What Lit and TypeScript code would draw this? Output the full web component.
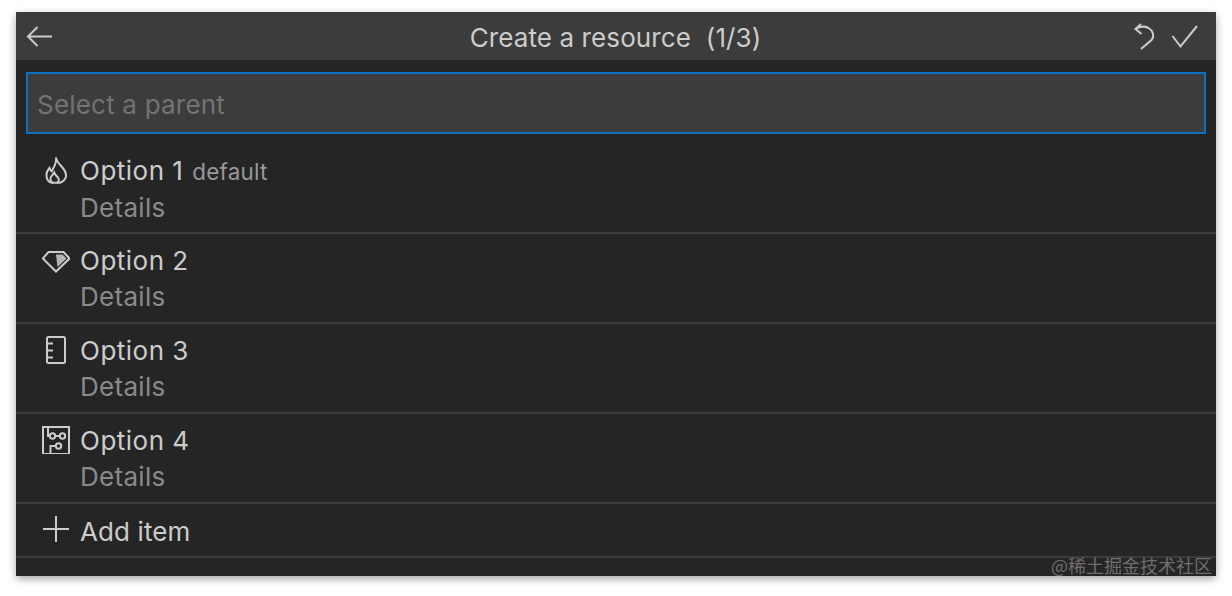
import { LitElement, html, css, svg } from 'lit';
import { customElement } from 'lit/decorators.js';

const flame = svg`<path d="M14 1.500c.5 4 3.500 6.500 6 9.500 3 3.500 5 7.500 3.500 11-1 2.500-3 4-5.500 4.800h-8C7.500 26.500 5.500 24.500 4.800 22c-1-3.500.5-7.500 2.700-10 .5 1.500 1 2.500 2.200 3.300C12 11 15 7 14 1.500z"/><path d="M11 27c-2.800-1.700-3.300-4.500-1.800-6.500l3-4c.5 2 2 3.200 3.300 4.500 2 2 1.700 4.500-.5 6"/>`;

const gem = svg`<path d="M6.500 6h15l6 6.500L14 25.500.8 12.500z"/><path d="M14 8.500h6.500l4 4L15.500 21z" fill="currentColor" stroke="none" opacity=".85"/>`;

const ruler = svg`<rect x="5" y="1" width="18" height="26" rx="1.500"/><path d="M5 7.500h6M5 14.500h6M5 21.500h6"/>`;

const board = svg`<rect x="1" y="1" width="26" height="27"/><circle cx="10.500" cy="10" r="2.700"/><circle cx="20.500" cy="10" r="2.700"/><circle cx="16.500" cy="20" r="2.700"/><path d="M6 1v9h1.800M13.200 10h4.600M13.800 20H8.500v8"/>`;

const options = [
  { label: 'Option 1', hint: 'default', icon: flame },
  { label: 'Option 2', hint: '', icon: gem },
  { label: 'Option 3', hint: '', icon: ruler },
  { label: 'Option 4', hint: '', icon: board },
];

@customElement('app-root')
export class AppRoot extends LitElement {
  static styles = css`
    :host {
      display: block;
      height: 596px;
      padding: 12px 16px 20px;
      box-sizing: border-box;
      background: #fff;
      font-family: Inter, 'Noto Sans', sans-serif;
    }

    .panel {
      position: relative;
      height: 564px;
      background: #252526;
      box-shadow: 0 3px 8px rgba(0, 0, 0, 0.35);
    }

    .title-bar {
      display: flex;
      align-items: center;
      height: 48px;
      padding: 0 17px 0 10px;
      background: #3c3c3c;
      color: #ccc;
    }

    .title {
      flex: 1;
      text-align: center;
      font-size: 26px;
      letter-spacing: 0.1px;
      padding: 3px 0 0 46px;
    }

    .actions {
      display: flex;
      gap: 12px;
    }

    .title-bar svg,
    .row svg {
      width: 28px;
      height: 28px;
      fill: none;
      stroke: currentColor;
      stroke-width: 2;
      display: block;
    }

    .input {
      display: flex;
      align-items: center;
      height: 62px;
      margin: 12px 10px 10px;
      padding: 3px 9px 0;
      box-sizing: border-box;
      border: 2px solid #0e70c0;
      background: #3c3c3c;
      color: #737373;
      font-size: 26px;
      letter-spacing: 0.2px;
    }

    .row {
      display: flex;
      height: 90px;
      box-sizing: border-box;
      border-bottom: 2px solid #3c3c3c;
      padding: 10px 0 0 26px;
      gap: 10px;
      color: #ccc;
    }

    .row svg {
      flex: none;
      margin-top: 2px;
    }

    .main {
      font-size: 26px;
      line-height: 34px;
      letter-spacing: 0.5px;
    }

    .hint {
      font-size: 22.500px;
      letter-spacing: 0.2px;
      color: #999;
      margin-left: 1px;
    }

    .detail {
      font-size: 26px;
      line-height: 37px;
      letter-spacing: 0.3px;
      color: #8a8a8a;
    }

    .row.add {
      height: 54px;
      align-items: center;
      padding-top: 0;
    }

    .row.add svg {
      margin-top: -2px;
    }

    .row.add .main {
      letter-spacing: 0.1px;
      padding-top: 3px;
    }

    .mark {
      position: absolute;
      right: 4px;
      bottom: 0;
      font-family: 'Noto Sans CJK SC', sans-serif;
      font-size: 18px;
      line-height: 22px;
      color: #6e6e6e;
    }
  `;

  render() {
    return html`
      <div class="panel">
        <div class="title-bar">
          <svg viewBox="0 0 28 28"><path d="M26 14.500H3M11.500 5l-9.500 9.500 9.500 9.500"/></svg>
          <div class="title">Create a resource&nbsp; (1/3)</div>
          <div class="actions">
            <svg viewBox="0 0 28 28"><path d="M10.500 12L4.500 7 10 2M4.500 7c4-2.500 9-3 13-1 4.500 2.500 6 7.500 3.500 11.500L10 27"/></svg>
            <svg viewBox="0 0 28 28"><path d="M1.500 14l8 10.500L26 4"/></svg>
          </div>
        </div>
        <div class="input">Select a parent</div>
        ${options.map(
          (o) => html`
            <div class="row">
              <svg viewBox="0 0 28 28">${o.icon}</svg>
              <div>
                <div class="main">${o.label}${o.hint ? html` <span class="hint">${o.hint}</span>` : ''}</div>
                <div class="detail">Details</div>
              </div>
            </div>
          `
        )}
        <div class="row add">
          <svg viewBox="0 0 28 28"><path d="M1 14h26M14 1v26"/></svg>
          <div class="main">Add item</div>
        </div>
        <div class="mark">@稀土掘金技术社区</div>
      </div>
    `;
  }
}
